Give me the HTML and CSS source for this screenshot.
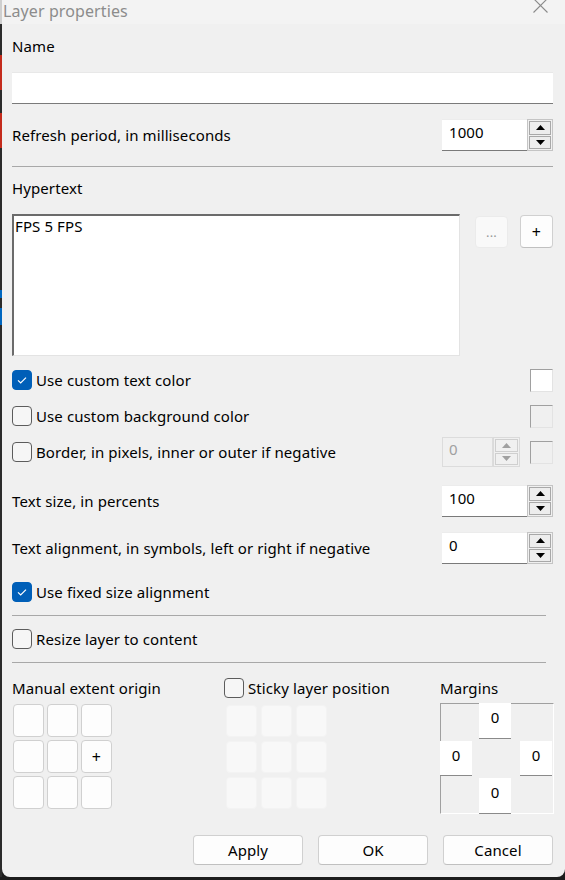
FILE: index.html
```html
<!DOCTYPE html>
<html>
<head>
<meta charset="utf-8">
<link rel="stylesheet" href="styles.css">
</head>
<body>
<div class="screen">
  <div class="edge"></div>
  <div class="window">
    <div class="titlebar">
      <span class="title">Layer properties</span>
      <svg class="close" viewBox="0 0 15 15"><path d="M0.5 0.5 L14.5 14.5 M14.5 0.5 L0.5 14.5" stroke="#8a8a8a" stroke-width="1.1" fill="none"/></svg>
    </div>
    <div class="content">
      <div class="label name-label">Name</div>
      <div class="textbox name-box"></div>

      <div class="field-row refresh-row">
        <span>Refresh period, in milliseconds</span>
        <div class="spin">
          <div class="spin-input">1000</div>
          <div class="spin-btns">
            <div class="spin-btn"><svg viewBox="0 0 9 5" class="tri"><polygon points="0,5 4.5,0 9,5"/></svg></div>
            <div class="spin-btn"><svg viewBox="0 0 9 5" class="tri"><polygon points="0,0 4.5,5 9,0"/></svg></div>
          </div>
        </div>
      </div>

      <div class="sep sep-full sep-1"></div>

      <div class="label hyper-label">Hypertext</div>
      <div class="hyper">
        <div class="textarea">FPS 5 FPS</div>
        <div class="btn square disabled">...</div>
        <div class="btn square plus">+</div>
      </div>

      <div class="check-row first-check">
        <span class="cb checked"><svg viewBox="0 0 20 20"><path d="M6 10.3 L8.7 13 L14 7.6" stroke="#fff" stroke-width="1.2" fill="none"/></svg></span>
        <span class="cb-text">Use custom text color</span>
        <span class="swatch white"></span>
      </div>
      <div class="check-row">
        <span class="cb"></span>
        <span class="cb-text">Use custom background color</span>
        <span class="swatch"></span>
      </div>
      <div class="check-row">
        <span class="cb"></span>
        <span class="cb-text">Border, in pixels, inner or outer if negative</span>
        <div class="spin spin-disabled">
          <div class="spin-input">0</div>
          <div class="spin-btns">
            <div class="spin-btn"><svg viewBox="0 0 9 5" class="tri"><polygon points="0,5 4.5,0 9,5"/></svg></div>
            <div class="spin-btn"><svg viewBox="0 0 9 5" class="tri"><polygon points="0,0 4.5,5 9,0"/></svg></div>
          </div>
        </div>
        <span class="swatch after-spin"></span>
      </div>

      <div class="field-row size-row">
        <span>Text size, in percents</span>
        <div class="spin">
          <div class="spin-input">100</div>
          <div class="spin-btns">
            <div class="spin-btn"><svg viewBox="0 0 9 5" class="tri"><polygon points="0,5 4.5,0 9,5"/></svg></div>
            <div class="spin-btn"><svg viewBox="0 0 9 5" class="tri"><polygon points="0,0 4.5,5 9,0"/></svg></div>
          </div>
        </div>
      </div>
      <div class="field-row align-row">
        <span>Text alignment, in symbols, left or right if negative</span>
        <div class="spin">
          <div class="spin-input">0</div>
          <div class="spin-btns">
            <div class="spin-btn"><svg viewBox="0 0 9 5" class="tri"><polygon points="0,5 4.5,0 9,5"/></svg></div>
            <div class="spin-btn"><svg viewBox="0 0 9 5" class="tri"><polygon points="0,0 4.5,5 9,0"/></svg></div>
          </div>
        </div>
      </div>

      <div class="check-row short fixed-row">
        <span class="cb checked"><svg viewBox="0 0 20 20"><path d="M6 10.3 L8.7 13 L14 7.6" stroke="#fff" stroke-width="1.2" fill="none"/></svg></span>
        <span class="cb-text">Use fixed size alignment</span>
      </div>

      <div class="sep sep-short sep-2"></div>

      <div class="check-row short resize-row">
        <span class="cb"></span>
        <span class="cb-text">Resize layer to content</span>
      </div>

      <div class="sep sep-short sep-3"></div>

      <div class="bottom">
        <div class="col col-manual">
          <div class="label">Manual extent origin</div>
          <div class="cells manual">
            <div class="cell"></div><div class="cell"></div><div class="cell"></div>
            <div class="cell"></div><div class="cell"></div><div class="cell">+</div>
            <div class="cell"></div><div class="cell"></div><div class="cell"></div>
          </div>
        </div>
        <div class="col col-sticky">
          <div class="check-row header-check">
            <span class="cb"></span>
            <span class="cb-text">Sticky layer position</span>
          </div>
          <div class="cells sticky">
            <div class="cell"></div><div class="cell"></div><div class="cell"></div>
            <div class="cell"></div><div class="cell"></div><div class="cell"></div>
            <div class="cell"></div><div class="cell"></div><div class="cell"></div>
          </div>
        </div>
        <div class="col col-margins">
          <div class="label">Margins</div>
          <div class="margins">
            <div class="m-in m-top">0</div>
            <div class="m-in m-left">0</div>
            <div class="m-in m-right">0</div>
            <div class="m-in m-bottom">0</div>
          </div>
        </div>
      </div>

      <div class="actions">
        <div class="btn action">Apply</div>
        <div class="btn action">OK</div>
        <div class="btn action">Cancel</div>
      </div>
    </div>
  </div>
</div>
</body>
</html>
```
FILE: styles.css
```css
* { box-sizing: border-box; }
html, body { margin: 0; padding: 0; }
body {
  width: 565px;
  height: 880px;
  overflow: hidden;
  background: #1c1c1c;
  font-family: "Noto Sans", "Open Sans", sans-serif;
  font-size: 15px;
  letter-spacing: 0.1px;
  color: #000;
}
.screen { display: flex; height: 877px; }
.edge {
  width: 2px;
  flex: none;
  background: linear-gradient(to bottom,
    #cfcfcf 0, #cfcfcf 24px,
    #2b2b2b 24px, #2b2b2b 55px,
    #c42b1c 55px, #c42b1c 90px,
    #2b2b2b 90px, #2b2b2b 113px,
    #c42b1c 113px, #c42b1c 148px,
    #2b2b2b 148px, #2b2b2b 290px,
    #0067c0 290px, #0067c0 298px,
    #2b2b2b 298px, #2b2b2b 308px,
    #0067c0 308px, #0067c0 325px,
    #2b2b2b 325px, #2b2b2b 100%);
}
.window {
  flex: 1;
  display: flex;
  flex-direction: column;
  background: #f0f0f0;
  border-radius: 0 0 8px 8px;
  overflow: hidden;
}
.titlebar {
  height: 24px;
  flex: none;
  display: flex;
  align-items: flex-start;
  background: #f3f3f3;
  padding-left: 1px;
}
.title { font-size: 16px; letter-spacing: 0.1px; line-height: 22px; color: #8c8c8c; white-space: nowrap; }
.close { margin-left: auto; margin-right: 17px; margin-top: -2px; width: 15px; height: 15px; }

.content {
  flex: 1;
  display: flex;
  flex-direction: column;
  padding: 12px 12px 12px 10px;
}
.label { height: 20px; line-height: 20px; white-space: nowrap; }
.textbox { background: #fff; border-top: 1px solid #e8e8e8; border-bottom: 1px solid #7a7a7a; }
.name-box { margin-top: 16px; height: 32px; }

.field-row { display: flex; align-items: center; justify-content: space-between; height: 32px; }
.field-row > span { white-space: nowrap; }
.refresh-row { margin-top: 15px; }
.size-row { margin-top: 15px; }
.align-row { margin-top: 15px; }

.spin { display: flex; height: 32px; }
.spin-input {
  width: 85px;
  height: 100%;
  background: #fff;
  border-top: 1px solid #ececec;
  border-bottom: 1px solid #7a7a7a;
  padding: 2px 0 0 7px;
  line-height: 20px;
}
.spin-btns {
  width: 26px;
  height: 100%;
  display: flex;
  flex-direction: column;
  border: 1px solid #c4c4c4;
  padding: 1px;
  gap: 1px;
  background: #f0f0f0;
}
.spin-btn {
  flex: 1;
  border: 1px solid #a8a8a8;
  background: #ededed;
  display: flex;
  align-items: center;
  justify-content: center;
}
.tri { width: 9px; height: 5px; fill: #000; }
.spin-disabled { height: 30px; }
.spin-disabled .spin-input {
  width: 51px;
  background: #f0f0f0;
  border: 1px solid #dcdcdc;
  color: #a0a0a0;
  padding: 1px 0 0 6px;
}
.spin-disabled .spin-btns { width: 27px; border-color: #dadada; }
.spin-disabled .spin-btn { border-color: #cfcfcf; background: #f0f0f0; }
.spin-disabled .tri { fill: #a0a0a0; }

.sep { height: 1px; background: #a8a8a8; flex: none; }
.sep-1 { margin-top: 15px; }
.sep-short { margin-right: 7px; }
.sep-2 { margin-top: 8px; }
.sep-3 { margin-top: 8px; }

.hyper-label { margin-top: 11px; }
.hyper { display: flex; align-items: flex-start; margin-top: 16px; }
.textarea {
  width: 448px;
  height: 142px;
  background: #fff;
  border-top: 2px solid #6b6b6b;
  border-left: 2px solid #6b6b6b;
  border-right: 1px solid #e3e3e3;
  border-bottom: 1px solid #e3e3e3;
  padding: 0 1px;
  line-height: 20px;
}
.btn {
  display: flex;
  align-items: center;
  justify-content: center;
  background: #fdfdfd;
  border: 1px solid #d0d0d0;
  border-bottom-color: #c0c0c0;
  border-radius: 4px;
  line-height: 20px;
}
.square { width: 33px; height: 33px; font-size: 16px; }
.disabled { margin-left: 15px; margin-top: 2px; height: 32px; background: #f9f9f9; border-color: #ebebeb; color: #9a9a9a; font-size: 13px; }
.plus { margin-left: 12px; margin-top: 1px; }

.check-row { display: flex; align-items: center; height: 36px; }
.check-row.short { height: 30px; }
.first-check { margin-top: 6px; }
.fixed-row { margin-top: 13px; }
.resize-row { margin-top: 8px; }
.cb {
  width: 20px;
  height: 20px;
  flex: none;
  border: 1px solid #5c5c5c;
  border-radius: 4px;
  background: #f6f6f6;
  display: flex;
}
.cb svg { width: 20px; height: 20px; margin: -1px; }
.cb.checked { background: #005fb8; border-color: #005fb8; }
.cb-text { margin-left: 4px; white-space: nowrap; line-height: 20px; }
.swatch {
  width: 23px;
  height: 23px;
  margin-left: auto;
  flex: none;
  background: #f0f0f0;
  border-top: 1px solid #a0a0a0;
  border-left: 1px solid #a0a0a0;
  border-right: 1px solid #e3e3e3;
  border-bottom: 1px solid #e3e3e3;
}
.swatch.white { background: #fff; }
.swatch.after-spin { margin-left: 10px; }
.check-row .spin { margin-left: auto; }

.bottom {
  display: grid;
  grid-template-columns: 212px 216px 1fr;
  margin-top: 15px;
}
.col { display: flex; flex-direction: column; }
.header-check { height: 20px; }
.cells { display: grid; }
.manual {
  grid-template-columns: repeat(3, 31px);
  grid-auto-rows: 33px;
  gap: 3px;
  margin: 6px 0 0 1px;
}
.sticky {
  grid-template-columns: repeat(3, 31px);
  grid-auto-rows: 32px;
  gap: 4px;
  margin: 7px 0 0 2px;
}
.cell {
  border-radius: 4px;
  display: flex;
  align-items: center;
  justify-content: center;
  font-size: 16px;
}
.manual .cell { background: #fdfdfd; border: 1px solid #d0d0d0; }
.sticky .cell { background: #f8f8f8; border: 1px solid #f3f3f3; }

.margins {
  margin-top: 5px;
  width: 114px;
  height: 111px;
  border-top: 1px solid #a0a0a0;
  border-left: 1px solid #a0a0a0;
  border-right: 1px solid #fff;
  border-bottom: 1px solid #fff;
  display: grid;
  grid-template-columns: 38px 32px 1fr;
  grid-template-rows: 35px 1fr 35px;
}
.m-in {
  background: #fff;
  border-bottom: 1px solid #8a8a8a;
  display: flex;
  justify-content: center;
  padding-top: 4px;
  line-height: 20px;
}
.m-top { grid-column: 2; grid-row: 1; margin-top: -1px; }
.m-left { grid-column: 1; grid-row: 2; width: 32px; margin-left: -1px; margin-top: 2px; height: 35px; }
.m-right { grid-column: 3; grid-row: 2; width: 32px; justify-self: end; margin-right: 1px; margin-top: 2px; height: 35px; }
.m-bottom { grid-column: 2; grid-row: 3; margin-bottom: -1px; }

.actions {
  display: flex;
  justify-content: flex-end;
  gap: 15px;
  margin-top: auto;
}
.action { width: 110px; height: 30px; font-size: 15px; }
```
